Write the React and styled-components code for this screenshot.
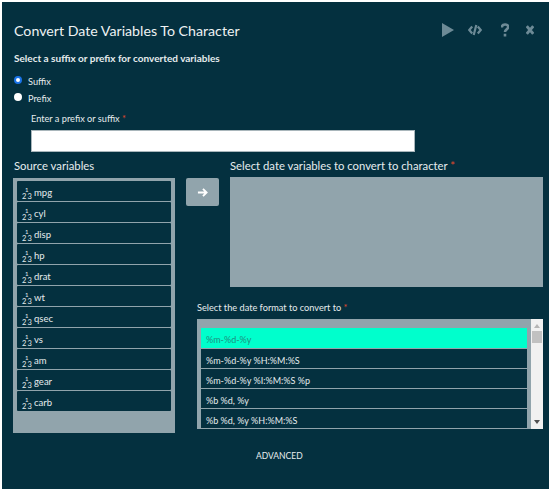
import React from "react";
import styled, { createGlobalStyle } from "styled-components";

const Global = createGlobalStyle`
  html, body { margin: 0; padding: 0; background: #fff; }
  * { box-sizing: border-box; }
`;
const Panel = styled.div`
  margin: 2px 0 0 2px;
  width: 547px;
  height: 487px;
  background: #04303f;
  color: #e6ecee;
  font-family: "Lato", "Noto Sans", sans-serif;
  padding: 0 6px 0 11px;
  overflow: hidden;
`;
const Header = styled.div`
  display: flex;
  align-items: center;
  justify-content: space-between;
  height: 44px;
  padding-top: 12px;
`;
const Title = styled.h1`
  margin: 0 0 0 1px;
  font-size: 14.2px;
  font-weight: 400;
  color: #eef2f3;
`;
const Tools = styled.div`
  display: flex;
  align-items: center;
  padding-right: 9px;
  color: #6d8a96;
`;
const Tool = styled.svg`
  width: ${(p) => p.$w}px;
  height: 14px;
  margin-left: ${(p) => p.$ml}px;
  fill: currentColor;
`;
const Heading = styled.div`
  margin: 5px 0 0 1px;
  font-size: 10px;
  font-weight: 700;
  line-height: 14px;
`;
const RadioRow = styled.label`
  display: flex;
  align-items: center;
  height: 17px;
  font-size: 9.2px;
  gap: 6px;
  padding-left: 1px;
`;
const Radios = styled.div`
  margin-top: 8px;
`;
const RadioDot = styled.span`
  width: 8px;
  height: 8px;
  border-radius: 50%;
  margin-top: -4px;
  background: #fff;
  border: ${(p) => (p.$on ? "2.5px solid #1a73e8" : "none")};
`;
const Prefix = styled.div`
  padding-left: 18px;
  margin-top: 6px;
`;
const SmallLabel = styled.div`
  font-size: 9.2px;
  line-height: 12px;
`;
const Star = styled.span`
  color: #e0492c;
`;
const TextBox = styled.div`
  width: 384px;
  height: 22px;
  margin-top: 5px;
  background: #fff;
  border: 1px solid #a9b6bb;
`;
const Columns = styled.div`
  display: grid;
  grid-template-columns: 162px 1fr;
  margin-top: 6px;
`;
const Left = styled.div`
  width: 162px;
`;
const ColTitle = styled.div`
  font-size: 11.3px;
  line-height: 16px;
  padding-left: ${(p) => (p.$inset ? 1 : 0)}px;
`;
const SourceBox = styled.div`
  margin-top: 4px;
  height: 255px;
  background: #91a4ac;
  padding: 3px 4px;
  display: flex;
  flex-direction: column;
  gap: 1px;
`;
const VarItem = styled.div`
  height: 20px;
  background: #04303f;
  border-radius: 1px;
  display: flex;
  align-items: center;
  padding: 3px 0 0 5px;
  gap: 2px;
  font-size: 9.5px;
`;
const TypeIcon = styled.span`
  position: relative;
  width: 10px;
  height: 14px;
  line-height: 1;
  flex: none;
  & > i { position: absolute; font-style: normal; font-size: 7.5px; }
  & > i:nth-child(1) { left: 3px; top: 1px; font-size: 6px; }
  & > i:nth-child(2) { left: 0; top: 7px; }
  & > i:nth-child(3) { left: 5.5px; top: 7px; }
`;
const Right = styled.div`
  display: flex;
  flex-direction: column;
  min-width: 0;
`;
const TopRight = styled.div`
  display: flex;
  gap: 11px;
  padding-left: 11px;
`;
const ArrowBtn = styled.div`
  width: 33px;
  height: 28px;
  margin-top: 20px;
  background: #91a4ac;
  border-radius: 2px;
  color: #fff;
  display: flex;
  align-items: center;
  justify-content: center;
  flex: none;
`;
const TargetCol = styled.div`
  flex: 1;
`;
const TargetBox = styled.div`
  margin-top: 3px;
  height: 110px;
  background: #91a4ac;
`;
const FormatWrap = styled.div`
  margin-top: 15px;
  margin-left: 22px;
`;
const FormatLabel = styled.div`
  font-size: 9.2px;
  line-height: 12px;
`;
const FormatBox = styled.div`
  margin-top: 5px;
  height: 110px;
  display: flex;
  background: #91a4ac;
`;
const FormatList = styled.div`
  flex: 1;
  padding: 9px 4px 0 4px;
  display: flex;
  flex-direction: column;
  gap: 1px;
  overflow: hidden;
`;
const FormatItem = styled.div`
  height: ${(p) => (p.$on ? 20 : 19)}px;
  flex: none;
  background: ${(p) => (p.$on ? "#00ffcc" : "#04303f")};
  color: ${(p) => (p.$on ? "#1f8f80" : "#e6ecee")};
  display: flex;
  align-items: center;
  padding: 3px 0 0 5px;
  font-size: 9px;
`;
const Scrollbar = styled.div`
  width: 12px;
  background: #f1f1f1;
  position: relative;
  display: flex;
  flex-direction: column;
  align-items: center;
  justify-content: space-between;
  padding: 5px 0;
`;
const Thumb = styled.div`
  position: absolute;
  top: 12px;
  left: 1px;
  width: 10px;
  height: 12px;
  background: #c1c1c1;
`;
const ArrowUp = styled.div`
  border: 3px solid transparent;
  border-top: 0;
  border-bottom: 4px solid #b5b5b5;
`;
const ArrowDown = styled.div`
  border: 3px solid transparent;
  border-bottom: 0;
  border-top: 4px solid #505050;
`;
const Advanced = styled.div`
  margin-top: 17px;
  margin-left: 243px;
  font-size: 8.5px;
  line-height: 12px;
`;

const vars = ["mpg","cyl","disp","hp","drat","wt","qsec","vs","am","gear","carb"];
const formats = ["%m-%d-%y","%m-%d-%y %H:%M:%S","%m-%d-%y %I:%M:%S %p","%b %d, %y","%b %d, %y %H:%M:%S"];

export default function App() {
  return (
    <>
      <Global />
      <Panel>
        <Header>
          <Title>Convert Date Variables To Character</Title>
          <Tools>
            <Tool $w={12} $ml={0} viewBox="0 0 12 14"><path d="M0 0 L12 7 L0 14 Z" /></Tool>
            <Tool $w={14} $ml={14} viewBox="0 0 14 14"><path d="M4.2 3.5 L1.3 7 L4.2 10.5 M9.8 3.5 L12.7 7 L9.8 10.5 M8.3 2 L5.7 12" fill="none" stroke="currentColor" strokeWidth="2.2" /></Tool>
            <Tool $w={8} $ml={19} viewBox="0 0 8 14"><path d="M0.8 4.5 C0.8 0.5 7.2 0.5 7.2 4 C7.2 6.5 4 6.3 4 9 M4 10.8 V13.5" fill="none" stroke="currentColor" strokeWidth="2.6" /></Tool>
            <Tool $w={8} $ml={17} viewBox="0 0 8 14"><path d="M0.8 3.2 L7.2 10.8 M7.2 3.2 L0.8 10.8" fill="none" stroke="currentColor" strokeWidth="2.8" /></Tool>
          </Tools>
        </Header>
        <Heading>Select a suffix or prefix for converted variables</Heading>
        <Radios>
          <RadioRow><RadioDot $on />Suffix</RadioRow>
          <RadioRow><RadioDot />Prefix</RadioRow>
        </Radios>
        <Prefix>
          <SmallLabel>Enter a prefix or suffix <Star>*</Star></SmallLabel>
          <TextBox />
        </Prefix>
        <Columns>
          <Left>
            <ColTitle $inset>Source variables</ColTitle>
            <SourceBox>
              {vars.map((v) => (
                <VarItem key={v}>
                  <TypeIcon><i>1</i><i>2</i><i>3</i></TypeIcon>
                  {v}
                </VarItem>
              ))}
            </SourceBox>
          </Left>
          <Right>
            <TopRight>
              <ArrowBtn>
                <svg width="11" height="11" viewBox="0 0 12 12"><path d="M1 6 H10 M6.5 2 L10.5 6 L6.5 10" fill="none" stroke="#fff" strokeWidth="2" /></svg>
              </ArrowBtn>
              <TargetCol>
                <ColTitle>Select date variables to convert to character <Star>*</Star></ColTitle>
                <TargetBox />
              </TargetCol>
            </TopRight>
            <FormatWrap>
              <FormatLabel>Select the date format to convert to <Star>*</Star></FormatLabel>
              <FormatBox>
                <FormatList>
                  {formats.map((f, i) => <FormatItem key={f} $on={i === 0}>{f}</FormatItem>)}
                </FormatList>
                <Scrollbar>
                  <ArrowUp /><Thumb /><ArrowDown />
                </Scrollbar>
              </FormatBox>
            </FormatWrap>
          </Right>
        </Columns>
        <Advanced>ADVANCED</Advanced>
      </Panel>
    </>
  );
}
